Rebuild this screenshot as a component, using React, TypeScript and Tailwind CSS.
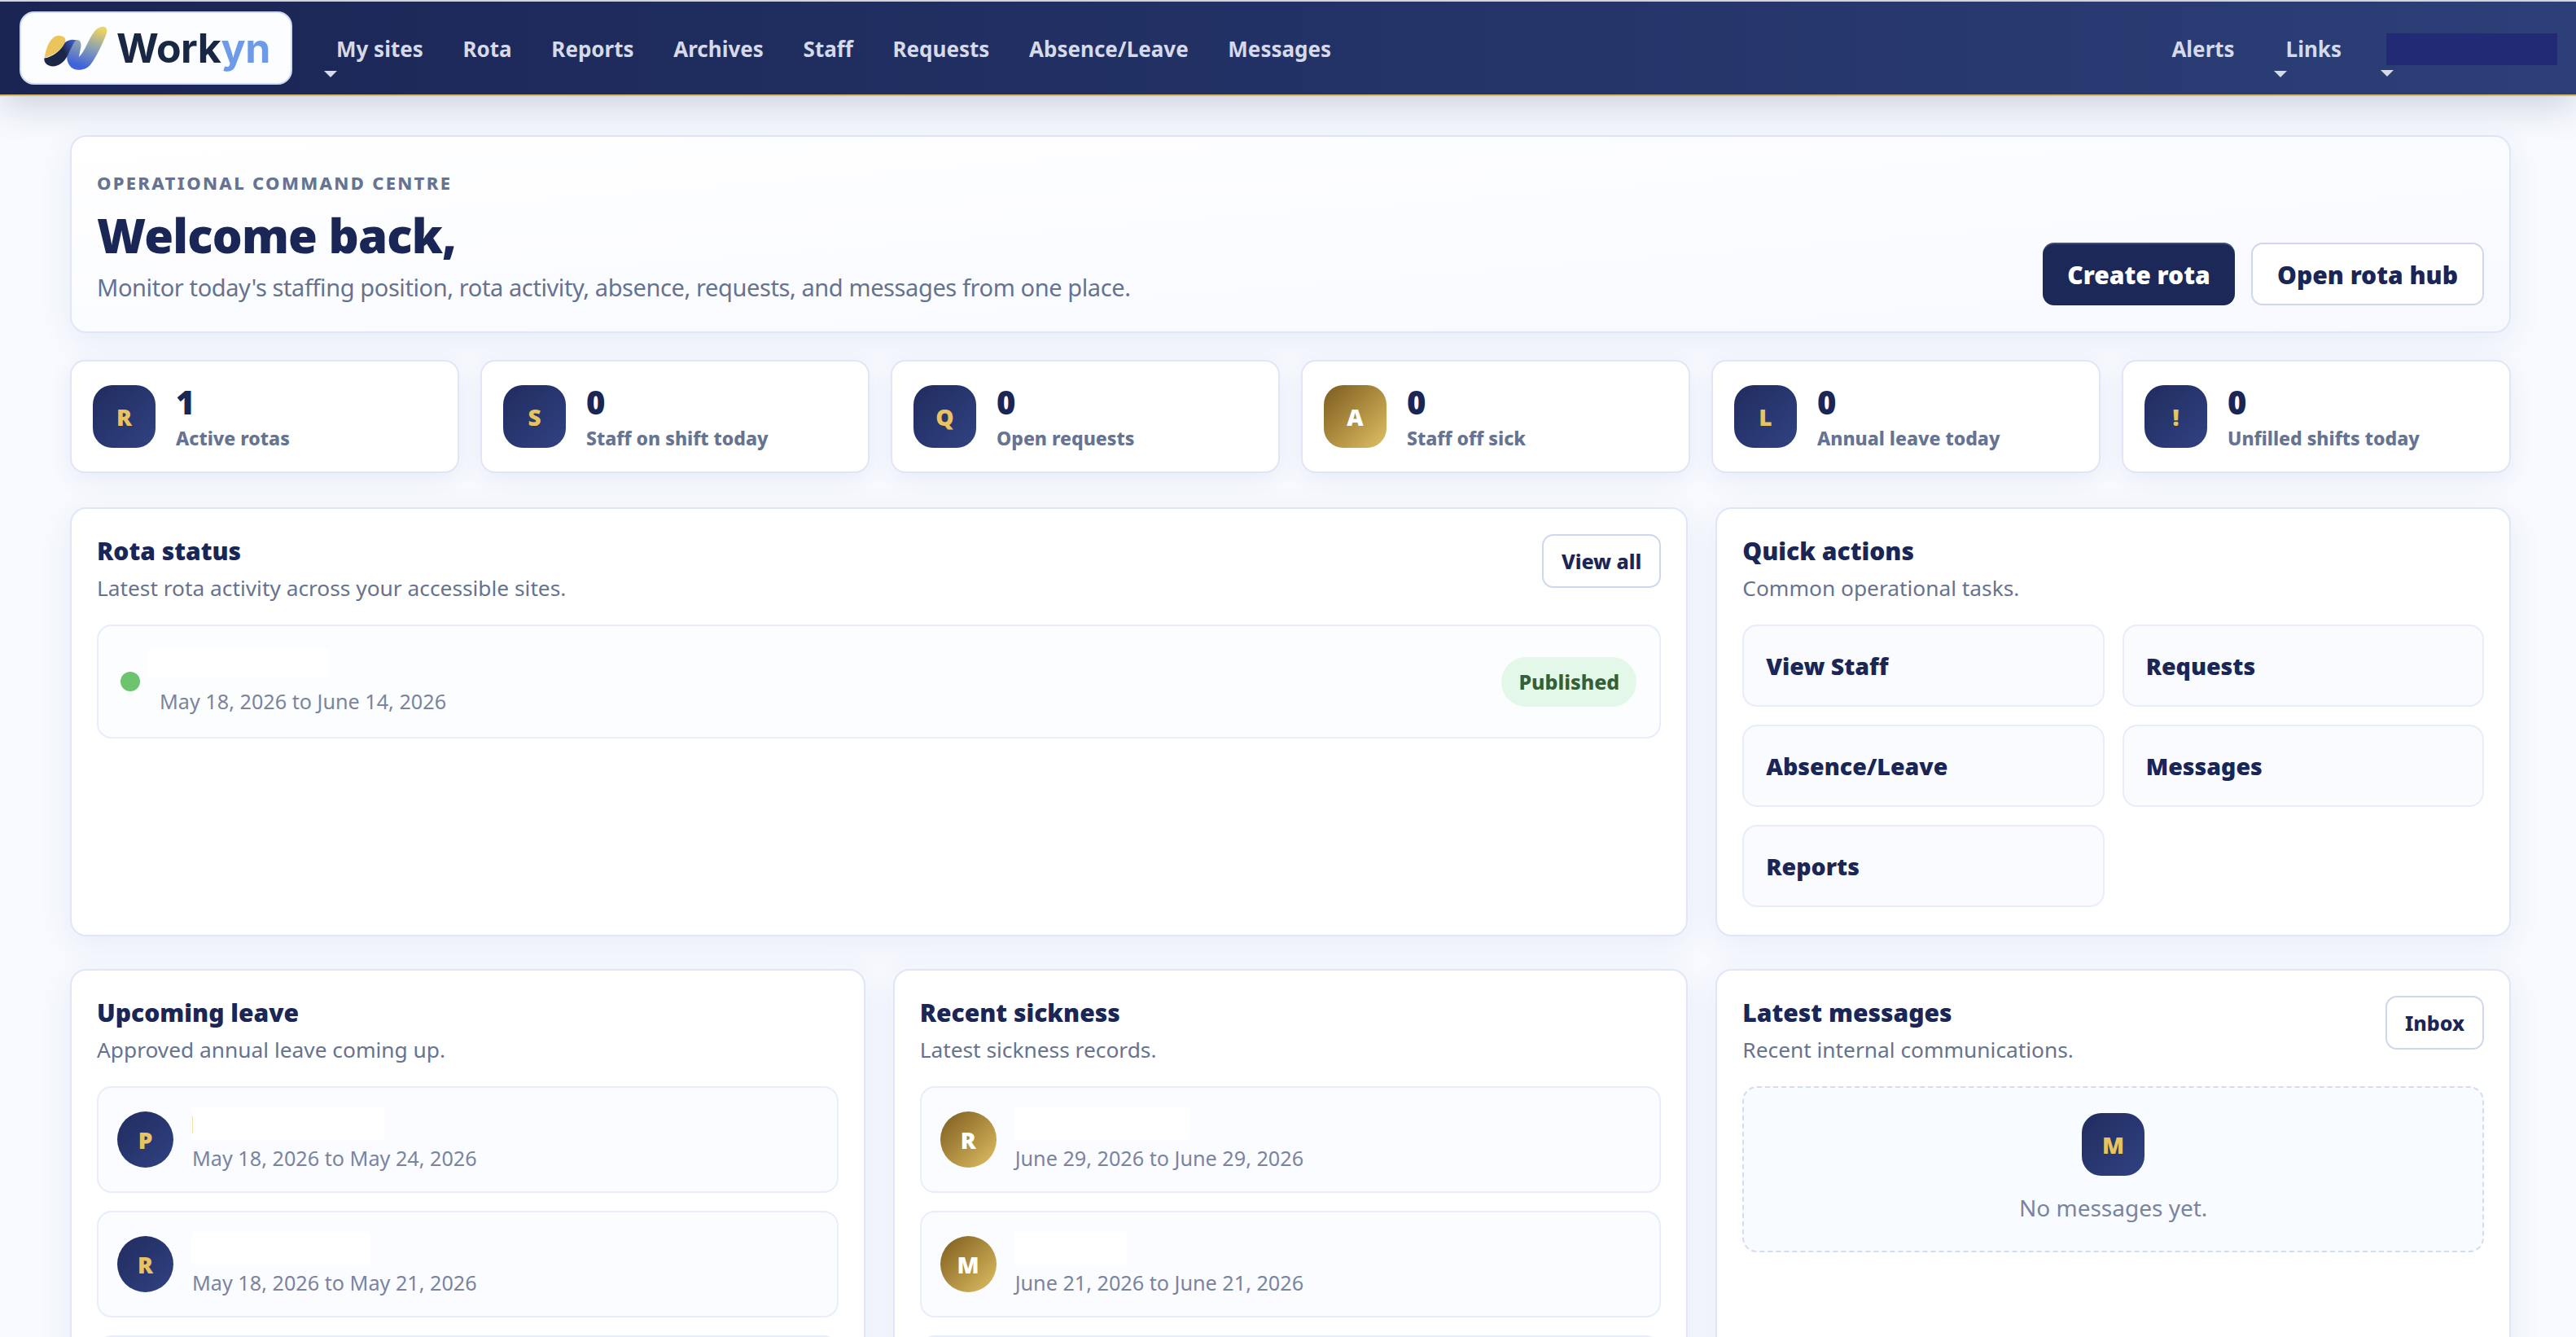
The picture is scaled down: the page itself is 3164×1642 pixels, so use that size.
import React from 'react';

const navLeft = [
  { label: 'My sites', caret: true },
  { label: 'Rota' },
  { label: 'Reports' },
  { label: 'Archives' },
  { label: 'Staff' },
  { label: 'Requests' },
  { label: 'Absence/Leave' },
  { label: 'Messages' },
];

const stats = [
  { letter: 'R', value: '1', label: 'Active rotas' },
  { letter: 'S', value: '0', label: 'Staff on shift today' },
  { letter: 'Q', value: '0', label: 'Open requests' },
  { letter: 'A', value: '0', label: 'Staff off sick', gold: true },
  { letter: 'L', value: '0', label: 'Annual leave today' },
  { letter: '!', value: '0', label: 'Unfilled shifts today' },
];

function Caret() {
  return <span className="absolute left-[-15px] top-[40px] w-0 h-0 border-x-[8px] border-x-transparent border-t-[8px] border-t-[#d5d9e8]" />;
}

function Logo() {
  return (
    <div className="w-[335px] h-[90px] bg-[#fbfdfe] border-2 border-[#cfd9f7] rounded-[18px] flex items-center pl-[27px] shrink-0">
      <svg width="80" height="55" viewBox="128 90 240 168" className="shrink-0">
        <defs>
          <linearGradient id="band" gradientUnits="userSpaceOnUse" x1="270" y1="250" x2="320" y2="95">
            <stop offset="0.05" stopColor="#3f63d8" />
            <stop offset="0.55" stopColor="#8fa3b0" />
            <stop offset="1" stopColor="#ecd460" />
          </linearGradient>
          <linearGradient id="navy" gradientUnits="userSpaceOnUse" x1="130" y1="220" x2="250" y2="160">
            <stop offset="0.6" stopColor="#1b2747" />
            <stop offset="1" stopColor="#3f5fd6" />
          </linearGradient>
        </defs>
        <path d="M215 205 C224 180 232 150 248 143 C264 138 272 155 266 175 L260 206 C284 184 296 136 320 108 C330 96 344 92 352 92 C366 94 368 106 362 122 C345 165 325 205 305 233 C290 253 262 260 240 250 C225 243 215 225 215 205 Z" fill="url(#band)" />
        <path d="M131 208 C138 162 158 126 184 126 C204 126 214 138 208 152 C190 186 160 202 131 208 Z" fill="#ecc45c" />
        <path d="M130 211 C162 205 190 186 208 152 C218 143 234 139 250 143 C240 150 228 180 216 204 C204 226 184 241 162 241 C142 241 128 228 130 211 Z" fill="url(#navy)" />
      </svg>
      <span className="ml-[10px] font-['Inter',sans-serif] font-bold text-[50px] leading-none tracking-[-0.5px] text-[#1a2744]">
        Work<span className="text-[#6e9ae8]">yn</span>
      </span>
    </div>
  );
}

function Nav() {
  return (
    <div className="h-[116px] mt-[2px] border-b-2 border-[#d9b85f] bg-gradient-to-r from-[#1a2554] to-[#2c3f78] flex items-center pl-[24px] pr-[23px] shadow-[0_14px_44px_rgba(26,37,84,0.18)] relative z-10">
      <Logo />
      <div className="flex items-center gap-[48.7px] ml-[54px] mt-[2px]">
        {navLeft.map((n) => (
          <div key={n.label} className="relative text-[26px] font-bold leading-none text-[#d6d9e8]">
            {n.label}
            {n.caret && <Caret />}
          </div>
        ))}
      </div>
      <div className="flex-1" />
      <div className="flex items-center mt-[2px]">
        <div className="text-[26px] font-bold leading-none text-[#d6d9e8] mr-[63px]">Alerts</div>
        <div className="relative text-[26px] font-bold leading-none text-[#d6d9e8] mr-[55px]">
          Links
          <Caret />
        </div>
        <div className="relative w-[210px] h-[39px] bg-[#232a75]">
          <span className="absolute left-[-7px] top-[45px] w-0 h-0 border-x-[8px] border-x-transparent border-t-[8px] border-t-[#d5d9e8]" />
        </div>
      </div>
    </div>
  );
}

function Badge({ letter, gold, round, size = 'w-[77px] h-[77px]' }: { letter: string; gold?: boolean; round?: boolean; size?: string }) {
  return (
    <div
      className={`${size} shrink-0 flex items-center justify-center font-black text-[28px] ${round ? 'rounded-full' : 'rounded-[24px]'} ${
        gold
          ? 'bg-gradient-to-br from-[#7d5c1e] to-[#e0c163] text-white'
          : 'bg-gradient-to-br from-[#212c5f] to-[#304282] text-[#e8c35f]'
      }`}
    >
      {letter}
    </div>
  );
}

function OutlineBtn({ children }: { children: React.ReactNode }) {
  return (
    <div className="h-[66px] px-[22px] pt-[2px] flex items-center bg-white border-2 border-[#cdd8ee] rounded-[14px] text-[25px] font-extrabold text-[#1a2655] shrink-0">
      {children}
    </div>
  );
}

function CardHead({ title, sub, action }: { title: string; sub: string; action?: string }) {
  return (
    <div className="flex justify-between items-start h-[109px]">
      <div>
        <div className="text-[30px] leading-[40px] font-black text-[#1a2655] mt-[1px]">{title}</div>
        <div className="text-[26.3px] leading-[36px] text-[#66738f] mt-[7px]">{sub}</div>
      </div>
      {action && <OutlineBtn>{action}</OutlineBtn>}
    </div>
  );
}

function Card({ children, className = '' }: { children: React.ReactNode; className?: string }) {
  return (
    <div className={`bg-white border-2 border-[#dfe6f8] rounded-[20px] p-[31px] shadow-[0_10px_40px_rgba(40,60,140,0.08)] ${className}`}>
      {children}
    </div>
  );
}

function PersonRow({ letter, gold, date, blank, mark }: { letter: string; gold?: boolean; date: string; blank: string; mark?: boolean }) {
  return (
    <div className="h-[131px] border-2 border-[#e7edfa] bg-[#fbfcff] rounded-[18px] flex items-center pl-[23px] shrink-0">
      <Badge letter={letter} gold={gold} round size="w-[69px] h-[69px]" />
      <div className="ml-[23px]">
        <div className={`relative h-[40px] bg-white ${blank}`}>
          {mark && <span className="absolute left-0 top-[11px] w-[1px] h-[21px] bg-[#f3dfa8]" />}
        </div>
        <div className="text-[25.2px] leading-[34px] text-[#7a849f] mt-[5px]">{date}</div>
      </div>
    </div>
  );
}

function EmptyRow() {
  return <div className="h-[131px] border-2 border-[#e7edfa] bg-[#fbfcff] rounded-[18px] shrink-0" />;
}

export default function App() {
  return (
    <div className="h-[1642px] overflow-hidden bg-[#f8faff] font-['Noto_Sans',sans-serif]">
      <div className="bg-[#dcdcdc] h-[2px] -mb-[2px]" />
      <Nav />
      <div className="pl-[86px] pr-[80px] pt-[48px] w-full">
        {/* hero */}
        <div className="h-[243px] border-2 border-[#dfe6f8] rounded-[20px] bg-gradient-to-br from-white to-[#f7f9ff] px-[31px] pt-[41px] pb-[32px] flex justify-between items-end shadow-[0_10px_40px_rgba(40,60,140,0.08)]">
          <div className="self-start">
            <div className="text-[22px] leading-[30px] font-extrabold tracking-[2.3px] text-[#667391] uppercase">Operational command centre</div>
            <div className="text-[58px] leading-[74px] font-black tracking-[-0.8px] text-[#1a2655] mt-[13px]">Welcome back,</div>
            <div className="text-[29px] leading-[40px] tracking-[-0.4px] text-[#66738f] mt-[7px]">Monitor today's staffing position, rota activity, absence, requests, and messages from one place.</div>
          </div>
          <div className="flex gap-[20px]">
            <div className="h-[77px] w-[236px] pt-[2px] flex items-center justify-center bg-[#1c2857] rounded-[14px] text-[30px] font-black text-white shadow-[inset_0_2px_0_rgba(255,255,255,0.16)]">Create rota</div>
            <div className="h-[77px] w-[286px] pt-[2px] flex items-center justify-center bg-white border-2 border-[#cdd8ee] rounded-[14px] text-[30px] font-black text-[#1a2655]">Open rota hub</div>
          </div>
        </div>

        {/* stats */}
        <div className="grid grid-cols-6 gap-[26px] mt-[33px]">
          {stats.map((s) => (
            <div key={s.label} className="h-[139px] bg-white border-2 border-[#dfe6f8] rounded-[18px] flex items-center pl-[26px] shadow-[0_8px_30px_rgba(40,60,140,0.08)]">
              <Badge letter={s.letter} gold={s.gold} />
              <div className="ml-[25px]">
                <div className="text-[40px] leading-[46px] font-black text-[#1a2655]">{s.value}</div>
                <div className="text-[23px] leading-[30px] font-extrabold text-[#667391] mt-[6px]">{s.label}</div>
              </div>
            </div>
          ))}
        </div>

        {/* rota status + quick actions */}
        <div className="grid grid-cols-3 gap-[34px] mt-[42px]">
          <Card className="col-span-2 h-[527px]">
            <CardHead title="Rota status" sub="Latest rota activity across your accessible sites." action="View all" />
            <div className="h-[140px] mt-[2px] border-2 border-[#e7edfa] bg-[#fcfdff] rounded-[18px] flex items-center justify-between pl-[27px] pr-[28px]">
              <div className="flex items-center">
                <div className="w-[24px] h-[24px] rounded-full bg-[#6cc46f] shrink-0" />
                <div className="ml-[9px]">
                  <div className="w-[223px] h-[36px] bg-white" />
                  <div className="text-[25.2px] leading-[34px] text-[#7a849f] ml-[15px] mt-[11px]">May 18, 2026 to June 14, 2026</div>
                </div>
              </div>
              <div className="h-[61px] w-[166px] pt-[2px] rounded-full bg-[#e3f8e8] flex items-center justify-center text-[25px] font-extrabold text-[#355f35]">Published</div>
            </div>
          </Card>
          <Card className="h-[527px]">
            <CardHead title="Quick actions" sub="Common operational tasks." />
            <div className="grid grid-cols-2 gap-x-[22px] gap-y-[22px] mt-[2px]">
              {['View Staff', 'Requests', 'Absence/Leave', 'Messages', 'Reports'].map((q) => (
                <div key={q} className="h-[101px] pt-[2px] border-2 border-[#e7edfa] bg-[#fafbff] rounded-[18px] flex items-center pl-[27px] text-[28.5px] font-black text-[#1a2655]">{q}</div>
              ))}
            </div>
          </Card>
        </div>

        {/* bottom row */}
        <div className="grid grid-cols-3 gap-[34px] mt-[40px]">
          <Card className="h-[700px]">
            <CardHead title="Upcoming leave" sub="Approved annual leave coming up." />
            <div className="flex flex-col gap-[22px] mt-[2px]">
              <PersonRow letter="P" date="May 18, 2026 to May 24, 2026" blank="w-[236px]" mark />
              <PersonRow letter="R" date="May 18, 2026 to May 21, 2026" blank="w-[219px]" />
              <EmptyRow />
            </div>
          </Card>
          <Card className="h-[700px]">
            <CardHead title="Recent sickness" sub="Latest sickness records." />
            <div className="flex flex-col gap-[22px] mt-[2px]">
              <PersonRow letter="R" gold date="June 29, 2026 to June 29, 2026" blank="w-[213px]" />
              <PersonRow letter="M" gold date="June 21, 2026 to June 21, 2026" blank="w-[137px]" />
              <EmptyRow />
            </div>
          </Card>
          <Card className="h-[700px]">
            <CardHead title="Latest messages" sub="Recent internal communications." action="Inbox" />
            <div className="h-[204px] mt-[2px] border-2 border-dashed border-[#d3dcf0] bg-[#f8fbff] rounded-[18px] flex flex-col items-center pt-[31px]">
              <Badge letter="M" />
              <div className="text-[28px] leading-[36px] text-[#7a849f] mt-[21px]">No messages yet.</div>
            </div>
          </Card>
        </div>
      </div>
    </div>
  );
}
